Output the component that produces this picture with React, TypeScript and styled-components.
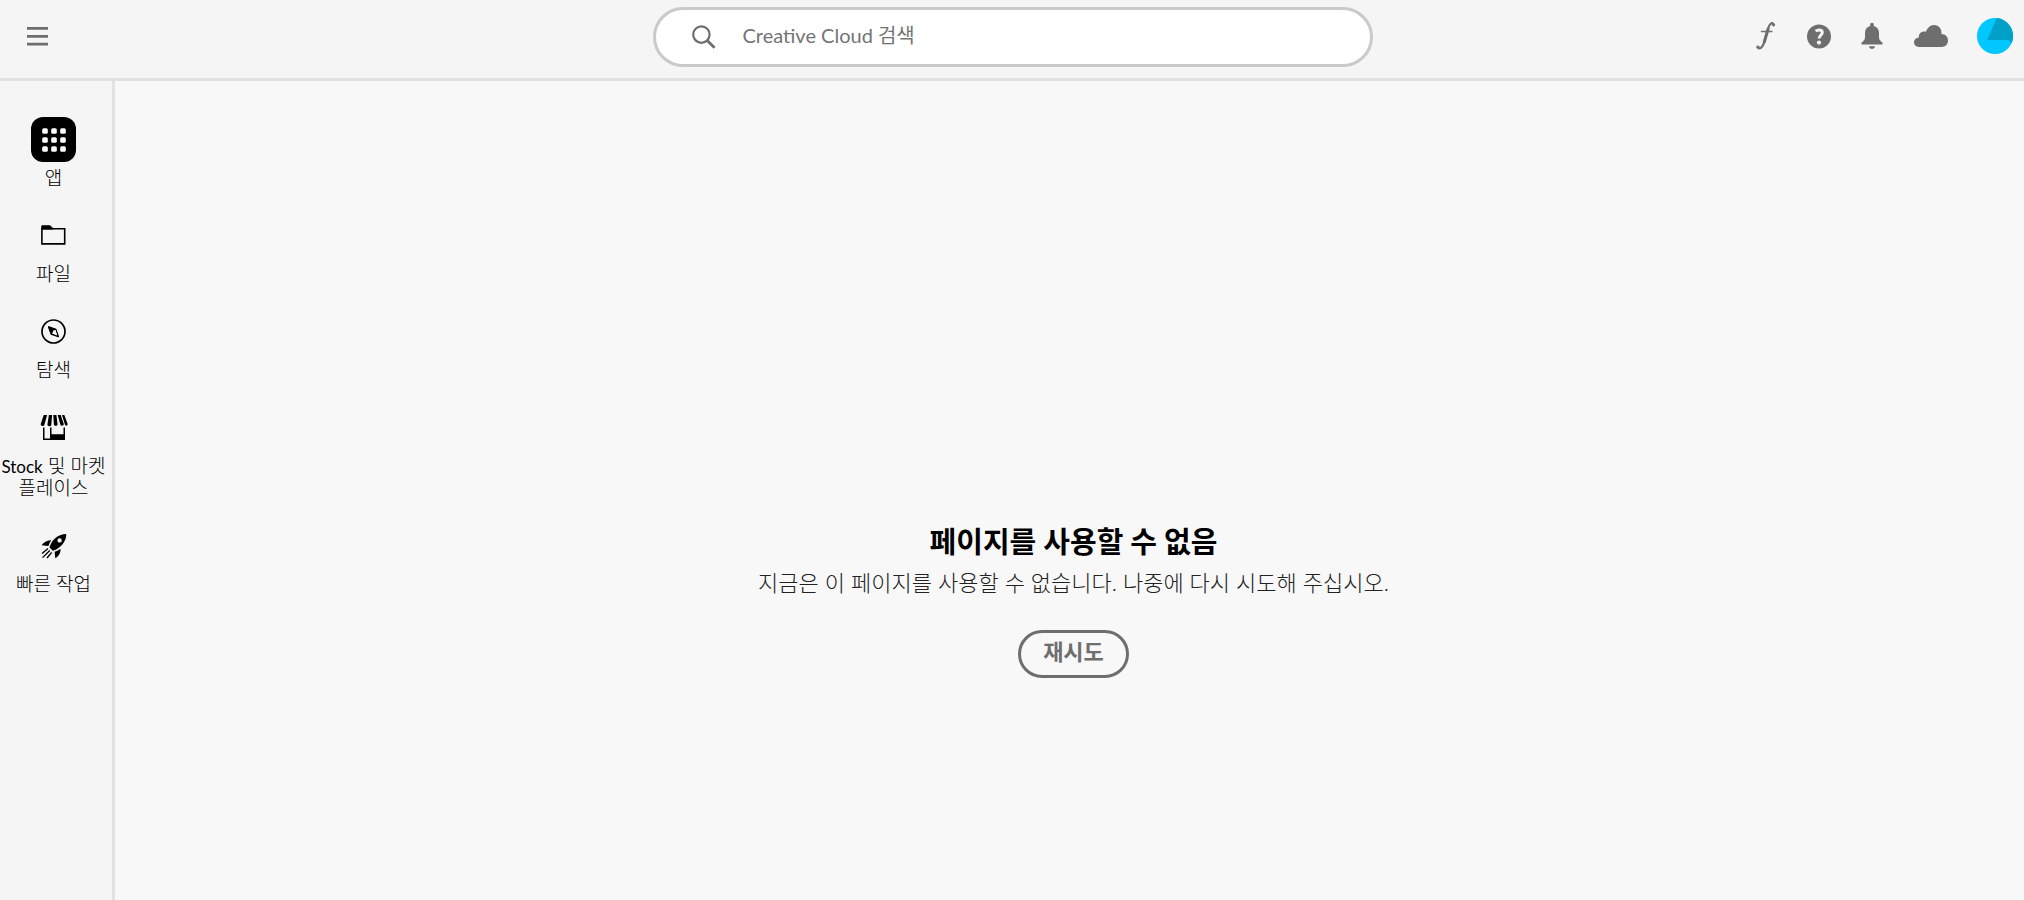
import React from 'react';
import styled, { createGlobalStyle } from 'styled-components';

const GlobalStyle = createGlobalStyle`
  *, *::before, *::after { box-sizing: border-box; }
  body {
    margin: 0;
    background: #f8f8f8;
    color: #000;
    font-family: Lato, 'Noto Sans CJK KR', sans-serif;
  }
  button { font-family: inherit; cursor: pointer; }
  svg { display: block; }
`;

const Page = styled.div`
  display: flex;
  flex-direction: column;
  min-height: 100vh;
`;

const Header = styled.header`
  display: grid;
  grid-template-columns: 1fr minmax(0, 720px) 1fr;
  align-items: center;
  padding: 7px 11px 11px 12px;
  border-bottom: 3px solid #e1e1e1;
  background: #f5f5f5;
`;

const IconButton = styled.button<{ $width?: number }>`
  display: flex;
  align-items: center;
  justify-content: center;
  width: ${(p) => p.$width ?? 26}px;
  height: 40px;
  padding: 0 0 2px;
  border: 0;
  background: none;
  color: #6e6e6e;
`;

const Search = styled.label`
  display: flex;
  align-items: center;
  gap: 27px;
  height: 60px;
  padding: 0 34px 0 36px;
  border: 3px solid #cacaca;
  border-radius: 30px;
  background: #fff;
  color: #6e6e6e;
`;

const SearchInput = styled.input`
  flex: 1;
  min-width: 0;
  height: 44px;
  padding: 0 0 5px;
  border: 0;
  outline: 0;
  background: none;
  font-family: Lato, 'Noto Sans CJK KR', sans-serif;
  font-size: 20px;
  font-weight: 400;
  &::placeholder { color: #747474; opacity: 1; }
`;

const Actions = styled.div`
  display: flex;
  align-items: center;
  justify-content: flex-end;
  gap: 28px;
`;

const Body = styled.div`
  display: flex;
  flex: 1;
`;

const Sidebar = styled.nav`
  flex: none;
  width: 115px;
  padding: 36px 5px 36px 0;
  border-right: 3px solid #e1e1e1;
  background: #f5f5f5;
`;

const NavList = styled.ul`
  display: flex;
  flex-direction: column;
  gap: 25px;
  margin: 0;
  padding: 0;
  list-style: none;
`;

const NavLink = styled.a`
  display: flex;
  flex-direction: column;
  align-items: center;
  gap: 5px;
  color: #000;
  font-size: 19px;
  font-weight: 300;
  line-height: 21px;
  text-align: center;
  text-decoration: none;
  white-space: nowrap;
`;

const NavIcon = styled.span<{ $active?: boolean }>`
  display: flex;
  align-items: center;
  justify-content: center;
  width: 45px;
  height: 45px;
  border-radius: 12px;
  background: ${(p) => (p.$active ? '#000' : 'transparent')};
  color: ${(p) => (p.$active ? '#fff' : '#000')};
`;

const Latin = styled.span`
  font-size: 17px;
  font-weight: 400;
`;

const Main = styled.main`
  display: flex;
  flex: 1;
  flex-direction: column;
  align-items: center;
  padding: 441px 0 40px 8px;
`;

const Title = styled.h1`
  margin: 0;
  font-size: 29px;
  font-weight: 700;
  line-height: 40px;
`;

const Message = styled.p`
  margin: 3px 0 29px;
  color: #222;
  font-size: 22px;
  font-weight: 300;
  line-height: 36px;
`;

const RetryButton = styled.button`
  height: 48px;
  padding: 0 22px 4px;
  border: 3px solid #6e6e6e;
  border-radius: 24px;
  background: none;
  color: #6e6e6e;
  font-size: 22px;
  font-weight: 700;
  line-height: 36px;
`;

const MenuIcon = () => (
  <svg width="21" height="19" viewBox="0 0 21 19" fill="currentColor" aria-hidden="true">
    <path d="M0 0h21v2.7H0zM0 8h21v2.7H0zM0 15.7h21v2.7H0z" />
  </svg>
);

const SearchIcon = () => (
  <svg width="24" height="24" viewBox="0 0 24 24" fill="none" stroke="currentColor" strokeWidth="2.2" aria-hidden="true">
    <circle cx="9.4" cy="9.6" r="8.2" />
    <path d="M15.2 15.4l7.4 7.4" strokeWidth="2.8" />
  </svg>
);

const FontsIcon = () => (
  <svg width="20" height="28" viewBox="0 0 20 28" fill="none" stroke="currentColor" strokeLinecap="round" aria-hidden="true">
    <path d="M17.600 2.200C15.600 0 13.400 2 12.300 6L8.400 19.500C7.100 24.500 4.600 28 1.600 25.400" strokeWidth="2.200" />
    <path d="M12.100 7L8.300 20" strokeWidth="3" />
    <path d="M5.500 9.400H15.800" strokeWidth="1.500" />
    <circle cx="17.500" cy="3" r="1" fill="currentColor" />
    <circle cx="1.900" cy="24.900" r="1" fill="currentColor" />
  </svg>
);

const HelpIcon = () => (
  <svg width="24" height="25" viewBox="0 0 24 25" aria-hidden="true">
    <circle cx="12" cy="12.5" r="12" fill="currentColor" />
    <path d="M8.6 7.1c1-.8 2.2-1.2 3.5-1.2 2 0 3.2 1 3.2 2.7 0 2.5-3.2 2.9-3.2 5.8" fill="none" stroke="#f5f5f5" strokeWidth="3" />
    <circle cx="12" cy="18.6" r="2.1" fill="#f5f5f5" />
  </svg>
);

const BellIcon = () => (
  <svg width="22" height="26" viewBox="0 0 22 26" fill="currentColor" aria-hidden="true">
    <path d="M9.2 3V1.6a1.8 1.8 0 0 1 3.6 0V3c3.3.8 5.2 3.4 5.2 6.8v4c0 3 1.1 4 3.2 5.6.7.6.9 2-.3 2H1.1c-1.2 0-1-1.4-.3-2C2.900 17.800 4 16.800 4 13.800v-4C4 6.400 5.900 3.800 9.200 3z" />
    <path d="M8 23.200h6c-.4 3.600-5.600 3.600-6 0z" />
  </svg>
);

const CloudIcon = () => (
  <svg width="34" height="22" viewBox="0 0 34 22" fill="currentColor" aria-hidden="true">
    <path d="M4.600 22C2 22 0 20 0 17.300c0-2.800 2-4.800 4.900-4.900C4.200 8.500 8.100 5.400 12 6.800 13.200 2.800 16.300 0 20.100 0c4.700 0 8 4 7.300 9C31.400 9 34 11.900 34 15.500 34 19.200 31.300 22 27.700 22z" />
  </svg>
);

const AvatarIcon = () => (
  <svg width="36" height="36" viewBox="0 0 36 36" aria-hidden="true">
    <circle cx="18" cy="18" r="18" fill="#00c8ff" />
    <path d="M19.700.1A18 18 0 0 1 34.600 25.200L31.500 22H10.200z" fill="#00a0c8" />
  </svg>
);

const AppsIcon = () => (
  <svg width="24" height="24" viewBox="0 0 24 24" fill="currentColor" aria-hidden="true">
    {[0, 9, 18].map((y) => [0, 9, 18].map((x) => (
      <rect key={`${x}-${y}`} x={x + 0.2} y={y + 0.2} width="5.600" height="5.600" rx="1.500" />
    )))}
  </svg>
);

const FolderIcon = () => (
  <svg width="25" height="21" viewBox="0 0 25 21" aria-hidden="true">
    <path d="M.8 4V.8h8.400L12.400 4z" fill="currentColor" stroke="currentColor" strokeLinejoin="round" />
    <path d="M.9 3.700h22.800v15.200H.9z" fill="none" stroke="currentColor" strokeWidth="1.600" />
  </svg>
);

const CompassIcon = () => (
  <svg width="25" height="25" viewBox="0 0 25 25" aria-hidden="true">
    <circle cx="12.500" cy="12.500" r="11.500" fill="none" stroke="currentColor" strokeWidth="1.700" />
    <path d="M7.700 7.900l7.100 2.500 2.500 7.100-7.100-2.500z" fill="none" stroke="currentColor" strokeWidth="1.500" strokeLinejoin="round" />
    <path d="M7 7.200l8 2.900-4.800 5.200z" fill="currentColor" />
    <path d="M12 11.800l2.500-.8 1.700 5.400-4.500-1.900z" fill="#f5f5f5" />
  </svg>
);

const StoreIcon = () => (
  <svg width="28" height="26" viewBox="0 0 28 26" fill="currentColor" aria-hidden="true">
    <path d="M3.700 0h3.400L4.400 10c-.7 1.700-4 1.400-3.700-.9zM8.900 0h3.200l-.8 10c-.4 1.700-4 1.700-3.900-.4zM13.300 0h3.100l1.200 9.400c0 1.900-3.500 1.900-3.700 0zM17.700 0h3l3.100 9c.3 1.900-2.900 2.500-3.500.5zM22 0h2.300l3.300 8.800c.3 2.200-2.100 2.500-2.700.8z" />
    <path d="M3 12.500h1.500v10.900H10V12.500h1.500v6.700h12v-6.700H25v12.500H3z" />
  </svg>
);

const RocketIcon = () => (
  <svg width="26" height="26" viewBox="0 0 26 26" fill="currentColor" aria-hidden="true">
    <path fillRule="evenodd" d="M8.600 14.100C10.600 7.600 15.600 1.500 24.400.9c.6 0 .9.300.9.900-.5 7.400-5.600 13.200-12.600 15.800-.6.200-1 .1-1.400-.4l-2.300-2.100c-.4-.3-.5-.6-.4-1zM18.600 5.200a2.200 2.200 0 1 0 0 4.400 2.200 2.200 0 0 0 0-4.400z" />
    <path d="M10.300 7.200c-1.300 1.900-2.200 3.600-2.900 5.700L.6 12.300c2.300-3.200 5.600-5.500 9.700-5.100zM19.500 15.700c.4 4.100-1.800 7.500-5.200 9.500l-.7-6.400c2.300-.8 4-1.800 5.900-3.100z" />
    <path d="M7 15.600L1 20.600M8.800 17.500L1.500 24.600M10.700 19.300L6 25" fill="none" stroke="currentColor" strokeWidth="1.300" />
  </svg>
);

const navItems = [
  { label: '앱', icon: <AppsIcon />, active: true },
  { label: '파일', icon: <FolderIcon /> },
  { label: '탐색', icon: <CompassIcon /> },
  { label: <><Latin>Stock</Latin> 및 마켓<br />플레이스</>, icon: <StoreIcon /> },
  { label: '빠른 작업', icon: <RocketIcon /> },
];

export default function App() {
  return (
    <Page>
      <GlobalStyle />
      <Header>
        <IconButton aria-label="메뉴" $width={50}><MenuIcon /></IconButton>
        <Search>
          <SearchIcon />
          <SearchInput type="search" aria-label="Creative Cloud 검색" placeholder="Creative Cloud 검색" />
        </Search>
        <Actions>
          <IconButton aria-label="글꼴"><FontsIcon /></IconButton>
          <IconButton aria-label="도움말" $width={24}><HelpIcon /></IconButton>
          <IconButton aria-label="알림"><BellIcon /></IconButton>
          <IconButton aria-label="클라우드" $width={36}><CloudIcon /></IconButton>
          <IconButton aria-label="계정" $width={36}><AvatarIcon /></IconButton>
        </Actions>
      </Header>
      <Body>
        <Sidebar>
          <NavList>
            {navItems.map((item, index) => (
              <li key={index}>
                <NavLink href="#" aria-current={item.active ? 'page' : undefined}>
                  <NavIcon $active={item.active}>{item.icon}</NavIcon>
                  <span>{item.label}</span>
                </NavLink>
              </li>
            ))}
          </NavList>
        </Sidebar>
        <Main>
          <Title>페이지를 사용할 수 없음</Title>
          <Message>지금은 이 페이지를 사용할 수 없습니다. 나중에 다시 시도해 주십시오.</Message>
          <RetryButton>재시도</RetryButton>
        </Main>
      </Body>
    </Page>
  );
}
